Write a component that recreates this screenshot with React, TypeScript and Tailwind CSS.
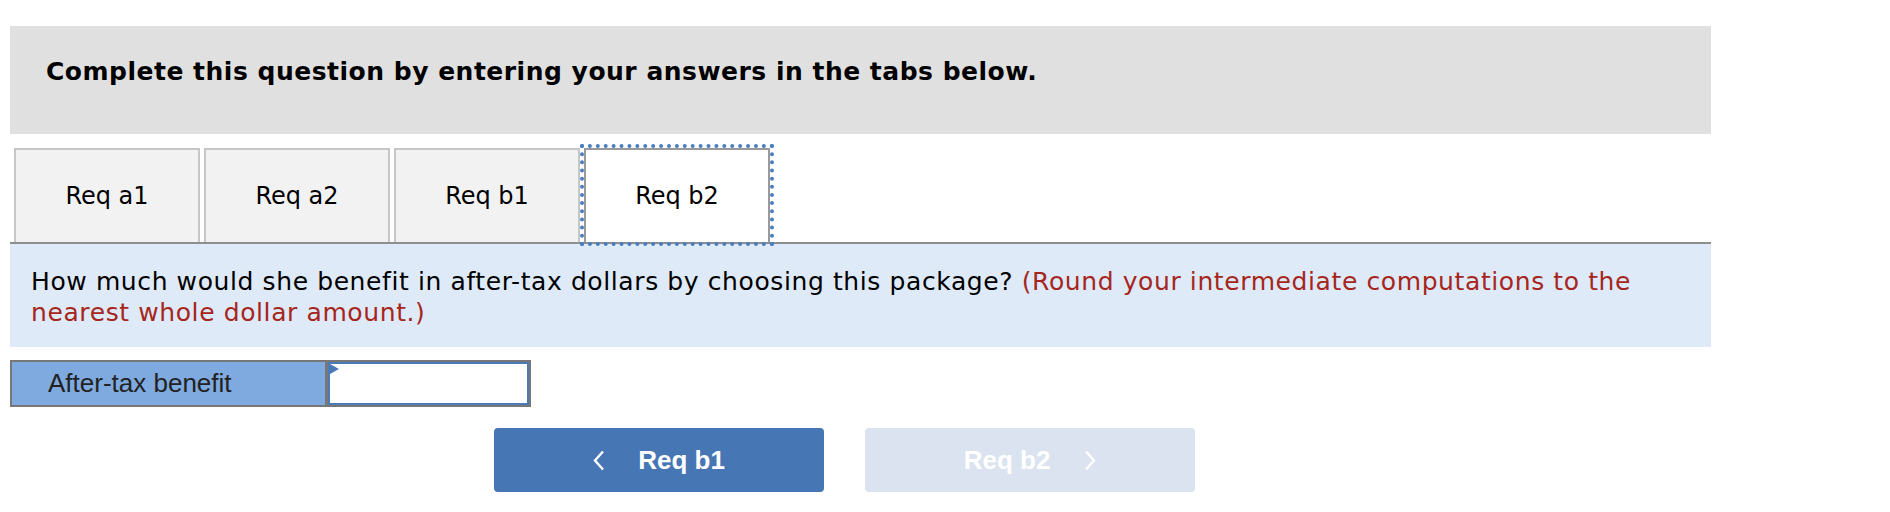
import React from 'react';

const tabs = ['Req a1', 'Req a2', 'Req b1', 'Req b2'];

function ChevronLeft() {
  return (
    <svg width="12" height="21" viewBox="0 0 12 21" fill="none">
      <path d="M10 1.5 L2 10.5 L10 19.5" stroke="white" strokeWidth="2.4" />
    </svg>
  );
}

function ChevronRight() {
  return (
    <svg width="12" height="21" viewBox="0 0 12 21" fill="none">
      <path d="M2 1.5 L10 10.5 L2 19.5" stroke="white" strokeWidth="2.4" />
    </svg>
  );
}

export default function App() {
  const active = 3;

  return (
    <div className="w-[1890px] h-[512px] bg-white pt-[26px] pl-[10px]">
      <div className="w-[1701px]">
        {/* header */}
        <div className="h-[108px] bg-[#e0e0e0] pl-[36px] pt-[33px]">
          <p className="font-['DejaVu_Sans',sans-serif] font-bold text-[25px] tracking-[0.5px] leading-[26px] text-black">
            Complete this question by entering your answers in the tabs below.
          </p>
        </div>

        {/* tabs */}
        <div className="mt-[14px] flex gap-[4px] pl-[4px] border-b-2 border-[#8e8e8e]">
          {tabs.map((t, i) => (
            <div
              key={t}
              className={
                i === active
                  ? 'relative z-10 w-[186px] h-[94px] -mb-[2px] flex items-center justify-center bg-white border-2 border-b-0 border-[#999] outline-[4px] outline-dotted outline-[#4a7ebf] font-["DejaVu_Sans",sans-serif] text-[24px] text-black'
                  : 'w-[186px] h-[94px] flex items-center justify-center bg-[#f2f2f2] border-2 border-b-0 border-[#c6c6c6] font-["DejaVu_Sans",sans-serif] text-[24px] text-black'
              }
            >
              {t}
            </div>
          ))}
        </div>

        {/* question */}
        <div className="bg-[#deeaf7] pl-[21px] pr-[20px] pt-[22px] pb-[19px]">
          <p className="font-['DejaVu_Sans',sans-serif] text-[25px] tracking-[0.6px] leading-[31px] text-black">
            How much would she benefit in after-tax dollars by choosing this package?{' '}
            <span className="text-[#a6261d]">
              (Round your intermediate computations to the nearest whole dollar amount.)
            </span>
          </p>
        </div>

        {/* answer row */}
        <div className="mt-[13px] flex w-[521px] h-[47px] border-2 border-[#777]">
          <div className="w-[316px] bg-[#7faadf] border-r-[3px] border-[#777] flex items-center pl-[36px] font-['Liberation_Sans',Arial,sans-serif] text-[26px] text-[#222]">
            After-tax benefit
          </div>
          <div className="relative flex-1 bg-white border-2 border-[#4a7ab8]">
            <span className="absolute left-0 top-0 w-0 h-0 border-y-[5px] border-y-transparent border-l-[9px] border-l-[#4a7ab8]" />
          </div>
        </div>

        {/* nav buttons */}
        <div className="mt-[21px] ml-[484px] flex gap-[41px]">
          <button className="w-[330px] h-[64px] rounded-[4px] bg-[#4676b4] flex items-center justify-center gap-[33px] font-['Liberation_Sans',Arial,sans-serif] font-bold text-[26px] text-white">
            <ChevronLeft />
            <span>Req b1</span>
          </button>
          <button className="w-[330px] h-[64px] rounded-[4px] bg-[#dae3ef] flex items-center justify-center gap-[34px] font-['Liberation_Sans',Arial,sans-serif] font-bold text-[26px] text-white">
            <span>Req b2</span>
            <ChevronRight />
          </button>
        </div>
      </div>
    </div>
  );
}
